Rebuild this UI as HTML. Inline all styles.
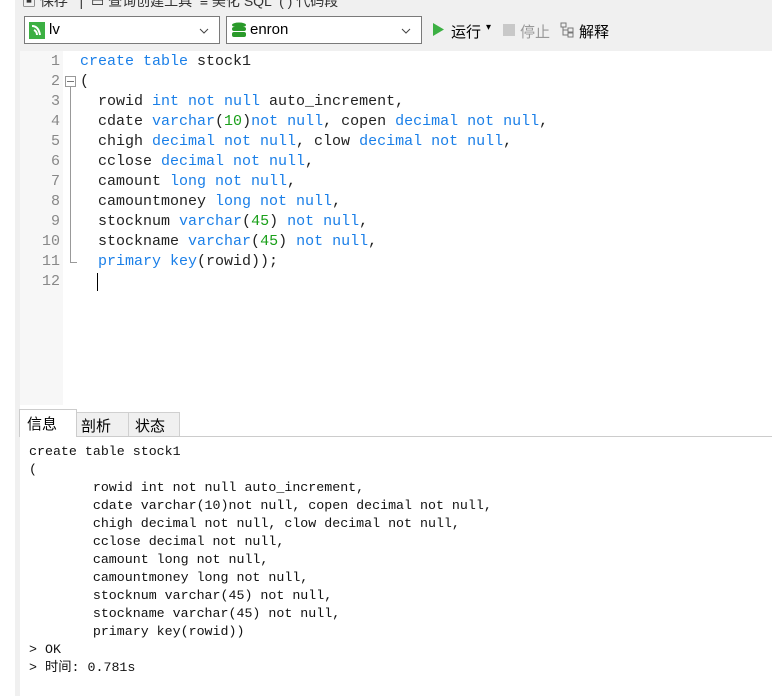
<!DOCTYPE html>
<html><head><meta charset="utf-8"><style>
*{margin:0;padding:0;box-sizing:border-box}
body{width:772px;height:696px;overflow:hidden;background:#fff;position:relative;font-family:"Liberation Sans","Noto Sans CJK SC",sans-serif}
.abs{position:absolute}
.mono{font-family:"Liberation Mono","DejaVu Sans Mono",monospace;white-space:pre}
.k{color:#1a7fe8}.n{color:#1aa01a}
</style></head><body>
<div class="abs" style="left:15px;top:0;width:757px;height:405px;background:#f0f0f0"></div>
<div class="abs" style="left:15px;top:0;width:5px;height:696px;background:#f0f0f0"></div>
<div class="abs" style="left:22px;top:-9px;font-size:14px;color:#333">▣ 保存 &nbsp;&nbsp;|&nbsp; ▭ 查询创建工具 &nbsp;≡ 美化 SQL &nbsp;( ) 代码段</div>
<div class="abs" style="left:24px;top:16px;width:196px;height:28px;border:1px solid #7a7a7a;background:#fff">
 <svg class="abs" style="left:4px;top:5px" width="16" height="17"><rect width="16" height="17" fill="#3cb043"/><path d="M3 4c4 0 7 3 8 9M5 8c2 1 3 3 3 5" stroke="#fff" stroke-width="2" fill="none"/></svg>
 <span class="abs" style="left:24px;top:4px;font-size:15px">lv</span>
 <svg class="abs" style="left:174px;top:11px" width="10" height="6"><path d="M1 1l4 4 4-4" stroke="#444" fill="none"/></svg>
</div>
<div class="abs" style="left:226px;top:16px;width:196px;height:28px;border:1px solid #7a7a7a;background:#fff">
 <svg class="abs" style="left:4px;top:5px" width="16" height="17"><ellipse cx="8" cy="3" rx="7" ry="2.5" fill="#2a9a2a"/><rect x="1" y="5" width="14" height="4" rx="2" fill="#2a9a2a"/><rect x="1" y="10" width="14" height="5" rx="2" fill="#2a9a2a"/></svg>
 <span class="abs" style="left:23px;top:4px;font-size:15px">enron</span>
 <svg class="abs" style="left:174px;top:11px" width="10" height="6"><path d="M1 1l4 4 4-4" stroke="#444" fill="none"/></svg>
</div>
<svg class="abs" style="left:432px;top:22px" width="13" height="15"><path d="M1 1L12 7.5L1 14Z" fill="#3cb043"/></svg>
<span class="abs" style="left:451px;top:21px;font-size:15px">运行</span>
<span class="abs" style="left:486px;top:22px;font-size:10px">▾</span>
<div class="abs" style="left:503px;top:24px;width:12px;height:12px;background:#c8c8c8"></div>
<span class="abs" style="left:520px;top:21px;font-size:15px;color:#999">停止</span>
<svg class="abs" style="left:560px;top:22px" width="17" height="16"><g fill="none" stroke="#777"><rect x="1" y="1" width="5" height="4"/><rect x="8" y="6" width="5" height="4"/><rect x="8" y="11" width="5" height="4"/><path d="M3 5v8h5M3 8h5"/></g></svg>
<span class="abs" style="left:579px;top:21px;font-size:15px">解释</span>
<div class="abs" style="left:20px;top:51px;width:752px;height:354px;background:#fff"></div>
<div class="abs" style="left:20px;top:51px;width:43px;height:354px;background:#f7f7f7"></div>
<div class="abs mono" style="left:20px;top:52px;width:40px;text-align:right;font-size:15px;line-height:20px;color:#888">1
2
3
4
5
6
7
8
9
10
11
12</div>
<div class="abs" style="left:65px;top:76px;width:11px;height:11px;border:1px solid #999;background:#fff"></div>
<div class="abs" style="left:67px;top:81px;width:7px;height:1px;background:#777"></div>
<div class="abs" style="left:70px;top:87px;width:1px;height:175px;background:#999"></div>
<div class="abs" style="left:70px;top:262px;width:7px;height:1px;background:#999"></div>
<div class="abs mono" style="left:80px;top:52px;font-size:15px;line-height:20px;color:#222"><span class="k">create table</span> stock1
(
  rowid <span class="k">int not null</span> auto_increment,
  cdate <span class="k">varchar</span>(<span class="n">10</span>)<span class="k">not null</span>, copen <span class="k">decimal not null</span>,
  chigh <span class="k">decimal not null</span>, clow <span class="k">decimal not null</span>,
  cclose <span class="k">decimal not null</span>,
  camount <span class="k">long not null</span>,
  camountmoney <span class="k">long not null</span>,
  stocknum <span class="k">varchar</span>(<span class="n">45</span>) <span class="k">not null</span>,
  stockname <span class="k">varchar</span>(<span class="n">45</span>) <span class="k">not null</span>,
  <span class="k">primary key</span>(rowid));</div>
<div class="abs" style="left:97px;top:273px;width:1px;height:18px;background:#000"></div>
<div class="abs" style="left:20px;top:436px;width:752px;height:1px;background:#ccc"></div>
<div class="abs" style="left:76px;top:412px;width:104px;height:24px;background:#f0f0f0;border:1px solid #d0d0d0;border-bottom:none"></div>
<div class="abs" style="left:128px;top:412px;width:1px;height:24px;background:#d0d0d0"></div>
<div class="abs" style="left:19px;top:409px;width:58px;height:28px;background:#fff;border:1px solid #ccc;border-bottom:none"></div>
<span class="abs" style="left:27px;top:413px;font-size:15px">信息</span>
<span class="abs" style="left:81px;top:415px;font-size:15px">剖析</span>
<span class="abs" style="left:135px;top:415px;font-size:15px">状态</span>
<div class="abs mono" style="left:29px;top:443px;font-size:13.3px;line-height:18px;color:#111">create table stock1
(
        rowid int not null auto_increment,
        cdate varchar(10)not null, copen decimal not null,
        chigh decimal not null, clow decimal not null,
        cclose decimal not null,
        camount long not null,
        camountmoney long not null,
        stocknum varchar(45) not null,
        stockname varchar(45) not null,
        primary key(rowid))
&gt; OK
&gt; 时间: 0.781s</div>
</body></html>
